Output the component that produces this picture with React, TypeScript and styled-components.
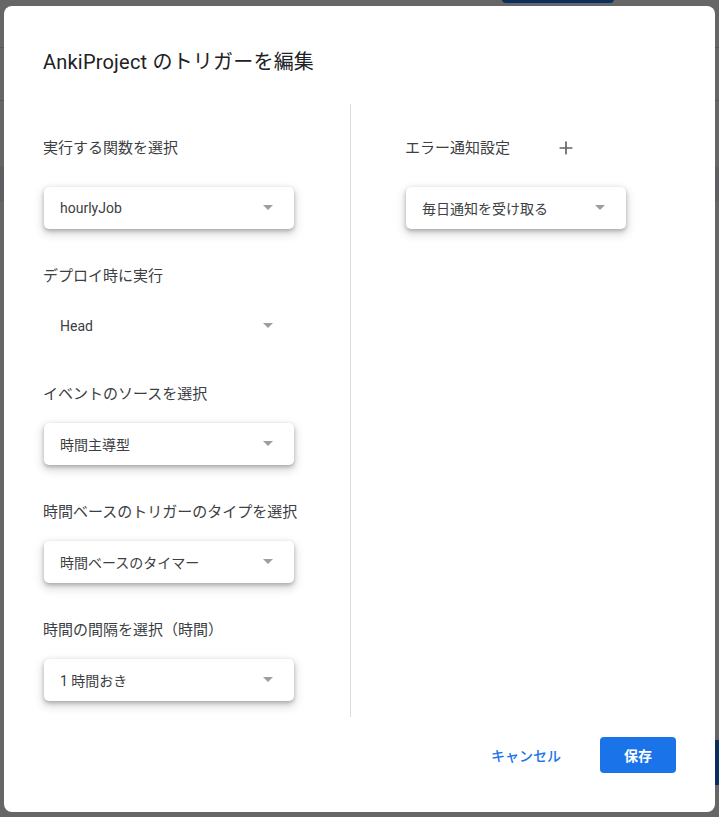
import React from 'react';
import styled, { createGlobalStyle } from 'styled-components';
import { Plus } from 'lucide-react';

const GlobalStyle = createGlobalStyle`
    html, body, #root {
        height: 100%;
    }
    body {
        margin: 0;
        font-family: Roboto, "Noto Sans CJK JP", sans-serif;
        color: #3c4043;
    }
`

// the editor page that sits behind the dialog
const Page = styled.div`
    height: 100%;
    background-color: #ffffff;
    display: flex;
    flex-direction: column;
    overflow: hidden;
`
const TopBar = styled.div`
    height: 3px;
    display: flex;
    align-items: flex-end;
    padding-left: 502px;
    overflow: hidden;
`
const PageAction = styled.div<{ $w: number; $h: number }>`
    flex: none;
    width: ${p => p.$w}px;
    height: ${p => p.$h}px;
    border-radius: 4px;
    background-color: #1a73e8;
`
const Rule = styled.div<{ $top: number }>`
    margin-top: ${p => p.$top}px;
    border-top: 1px solid #dadce0;
`
const ActiveRow = styled.div`
    margin-top: 66px;
    height: 34px;
    background-color: #e8eef7;
`
const BottomBar = styled.div`
    margin-top: auto;
    display: flex;
    justify-content: flex-end;
    padding-bottom: 32px;
    margin-right: -90px;
`

const Scrim = styled.div`
    position: fixed;
    inset: 0;
    background-color: rgba(0, 0, 0, 0.6);
    display: flex;
    align-items: center;
    justify-content: center;
`
const Dialog = styled.div`
    width: 711px;
    box-sizing: border-box;
    padding: 42px 39px 39px 40px;
    background-color: #ffffff;
    border-radius: 8px;
    display: flex;
    flex-direction: column;
`
const Title = styled.h2`
    margin: 0 0 0 -1px;
    font-size: 20px;
    line-height: 28px;
    font-weight: 400;
    letter-spacing: 0.2px;
    color: #202124;
`
const Body = styled.div`
    margin-top: 28px;
    display: flex;
`
const Column = styled.div<{ $side: 'left' | 'right' }>`
    display: flex;
    flex-direction: column;
    box-sizing: border-box;
    padding: 34px 0 16px ${p => (p.$side === 'right' ? 55 : 0)}px;
    ${p => p.$side === 'left'
        ? 'width: 307px; border-right: 1px solid #dadce0;'
        : 'flex: 1;'}
`
const Field = styled.div<{ $first?: boolean }>`
    display: flex;
    flex-direction: column;
    gap: ${p => (p.$first ? 29 : 19)}px;
    & + & {
        margin-top: 37px;
    }
`
const LabelRow = styled.div`
    display: flex;
    align-items: center;
    height: 20px;
    margin-left: -1px;
`
const Label = styled.span`
    font-size: 15px;
    line-height: 20px;
    color: #3c4043;
    white-space: nowrap;
`
const IconButton = styled.button`
    margin-left: 46px;
    width: 20px;
    height: 20px;
    padding: 0;
    border: none;
    background: none;
    color: #5f6368;
    display: flex;
    align-items: center;
    justify-content: center;
    cursor: pointer;
`
const Select = styled.div<{ $width: number; $flat?: boolean }>`
    width: ${p => p.$width}px;
    height: 42px;
    box-sizing: border-box;
    padding: 0 21px 0 16px;
    display: flex;
    align-items: center;
    justify-content: space-between;
    border-radius: 5px;
    background-color: #ffffff;
    box-shadow: ${p => (p.$flat
        ? 'none'
        : '0 2px 4px rgba(0, 0, 0, 0.26), 0 4px 10px 2px rgba(0, 0, 0, 0.13)')};
    font-size: 14px;
    color: #3c4043;
    cursor: pointer;
`
const Caret = styled.span`
    width: 0;
    height: 0;
    border-left: 5px solid transparent;
    border-right: 5px solid transparent;
    border-top: 5px solid #9e9e9e;
`
const Footer = styled.div`
    margin-top: 20px;
    display: flex;
    justify-content: flex-end;
    align-items: center;
    gap: 15px;
`
const Button = styled.button<{ $primary?: boolean }>`
    height: 36px;
    padding: 0 24px;
    min-width: 76px;
    border: none;
    border-radius: 4px;
    font-family: Roboto, "Noto Sans CJK JP", sans-serif;
    font-size: 14px;
    font-weight: ${p => (p.$primary ? 700 : 500)};
    color: ${p => (p.$primary ? '#ffffff' : '#1a73e8')};
    background-color: ${p => (p.$primary ? '#1a73e8' : 'transparent')};
    cursor: pointer;
`

interface DropdownProps {
    value: string;
    width?: number;
    flat?: boolean;
}

const Dropdown: React.FC<DropdownProps> = ({ value, width = 250, flat }) => (
    <Select $width={width} $flat={flat}>
        <span>{value}</span>
        <Caret />
    </Select>
)

const leftFields = [
    { label: 'デプロイ時に実行', value: 'Head', flat: true },
    { label: 'イベントのソースを選択', value: '時間主導型' },
    { label: '時間ベースのトリガーのタイプを選択', value: '時間ベースのタイマー' },
    { label: '時間の間隔を選択（時間）', value: '1 時間おき' },
]

const App: React.FC = () => {
    return (
        <>
            <GlobalStyle />
            <Page>
                <TopBar>
                    <PageAction $w={112} $h={36} />
                </TopBar>
                <Rule $top={44} />
                <Rule $top={52} />
                <ActiveRow />
                <BottomBar>
                    <PageAction $w={100} $h={45} />
                </BottomBar>
            </Page>
            <Scrim>
                <Dialog>
                    <Title>AnkiProject のトリガーを編集</Title>
                    <Body>
                        <Column $side="left">
                            <Field $first>
                                <LabelRow>
                                    <Label>実行する関数を選択</Label>
                                </LabelRow>
                                <Dropdown value="hourlyJob" />
                            </Field>
                            {leftFields.map(f => (
                                <Field key={f.label}>
                                    <LabelRow>
                                        <Label>{f.label}</Label>
                                    </LabelRow>
                                    <Dropdown value={f.value} flat={f.flat} />
                                </Field>
                            ))}
                        </Column>
                        <Column $side="right">
                            <Field $first>
                                <LabelRow>
                                    <Label>エラー通知設定</Label>
                                    <IconButton aria-label="通知を追加">
                                        <Plus size={20} strokeWidth={2} />
                                    </IconButton>
                                </LabelRow>
                                <Dropdown value="毎日通知を受け取る" width={220} />
                            </Field>
                        </Column>
                    </Body>
                    <Footer>
                        <Button>キャンセル</Button>
                        <Button $primary>保存</Button>
                    </Footer>
                </Dialog>
            </Scrim>
        </>
    )
}

export default App;
